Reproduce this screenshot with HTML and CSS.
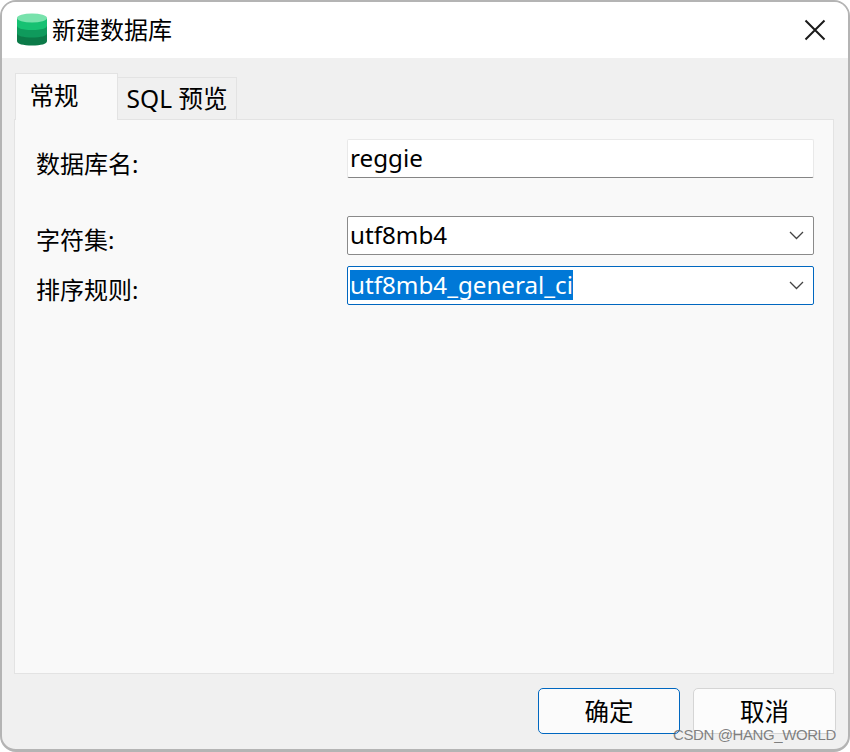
FILE: index.html
```html
<!DOCTYPE html>
<html lang="zh-CN">
<head>
  <meta charset="UTF-8">
  <meta name="viewport" content="width=device-width, initial-scale=1.0">
  <title>新建数据库</title>
  <link rel="stylesheet" href="styles.css">
</head>
<body>
  <div class="window">
    <div class="titlebar">
      <svg class="db-icon" width="30" height="34" viewBox="0 0 30 34">
        <path d="M0 5v23c0 3 6 4.500 15 4.500s15-1.500 15-4.500V5z" fill="#0b7a48"/>
        <path d="M0 5v15c0 3 6 4.500 15 4.500S30 23 30 20V5z" fill="#0f9a5c"/>
        <path d="M0 5v7.500c0 3 6 4.500 15 4.500s15-1.500 15-4.500V5z" fill="#16c172"/>
        <ellipse cx="15" cy="5" rx="15" ry="4.500" fill="#78e2ac"/>
      </svg>
      <span class="title">新建数据库</span>
      <svg class="close" width="22" height="22" viewBox="0 0 22 22">
        <path d="M1.500 1.500l19 19M20.500 1.500l-19 19" stroke="#1a1a1a" stroke-width="2" fill="none"/>
      </svg>
    </div>

    <div class="content">
      <div class="tabs">
        <div class="tab active">常规</div>
        <div class="tab">SQL 预览</div>
      </div>

      <div class="panel">
        <div class="row row-name">
          <label>数据库名:</label>
          <div class="field field-text">reggie</div>
        </div>
        <div class="row row-charset">
          <label>字符集:</label>
          <div class="field">
            utf8mb4
            <svg class="chev" width="15" height="9" viewBox="0 0 15 9"><path d="M1 1l6.500 6.500L14 1" stroke="#444" stroke-width="1.300" fill="none"/></svg>
          </div>
        </div>
        <div class="row row-collation">
          <label>排序规则:</label>
          <div class="field focused">
            <span class="selected">utf8mb4_general_ci</span>
            <svg class="chev" width="15" height="9" viewBox="0 0 15 9"><path d="M1 1l6.500 6.500L14 1" stroke="#444" stroke-width="1.300" fill="none"/></svg>
          </div>
        </div>
      </div>

      <div class="footer">
        <button class="btn primary">确定</button>
        <button class="btn btn-cancel">取消</button>
      </div>
    </div>

    <div class="watermark">CSDN @HANG_WORLD</div>
  </div>
</body>
</html>
```

FILE: styles.css
```css
* {
  box-sizing: border-box;
}
body {
  margin: 0;
  background: #fff;
  font-family: "Noto Sans", "Noto Sans CJK SC", sans-serif;
  font-size: 24px;
  color: #000;
}
.window {
  position: relative;
  width: 850px;
  height: 752px;
  display: flex;
  flex-direction: column;
  border: 2px solid #b4b4b4;
  border-bottom-width: 3px;
  border-radius: 16px;
  overflow: hidden;
  background: #f0f0f0;
}
.titlebar {
  height: 56px;
  flex: none;
  display: flex;
  align-items: center;
  padding: 0 22px 0 15px;
  background: #fff;
}
.db-icon {
  margin-right: 5px;
}
.title {
  flex: 1;
  font-size: 24px;
  line-height: 56px;
}
.content {
  flex: 1;
  display: flex;
  flex-direction: column;
  padding: 15px 14px 0 12px;
}
.tabs {
  display: flex;
  align-items: flex-end;
  height: 46px;
  padding-left: 1px;
  font-size: 24.5px;
}
.tab {
  width: 119px;
  height: 42px;
  border: 1px solid #e3e3e3;
  border-left: 0;
  border-bottom: 0;
  background: #f0f0f0;
  line-height: 42px;
  text-align: center;
}
.tab.active {
  width: 103px;
  height: 47px;
  margin-bottom: -1px;
  line-height: 43px;
  border-left: 1px solid #e3e3e3;
  background: #f9f9f9;
  padding-right: 25px;
  position: relative;
  z-index: 1;
}
.panel {
  height: 555px;
  padding: 19px 19px 0 21px;
  border: 1px solid #e3e3e3;
  background: #f9f9f9;
}
.row {
  display: flex;
  align-items: center;
  height: 39px;
}
.row label {
  width: 311px;
  flex: none;
  margin-top: 5px;
}
.row-name label {
  margin-top: 8px;
}
.row-charset {
  margin-top: 38px;
}
.row-collation {
  margin-top: 11px;
}
.field {
  flex: 1;
  height: 39px;
  display: flex;
  align-items: center;
  justify-content: space-between;
  padding: 0 9px 2px 2px;
  border: 1px solid #8a8a8a;
  border-radius: 2px;
  background: #fff;
  font-size: 24.2px;
}
.field-text {
  border-color: #e9e9e9;
  border-bottom: 1.500px solid #858585;
}
.field.focused {
  border-color: #0067c0;
}
.selected {
  background: #0078d7;
  color: #fff;
  line-height: 30px;
}
.chev {
  margin-top: 2px;
}
.footer {
  display: flex;
  justify-content: flex-end;
  gap: 13px;
  padding-top: 14px;
  margin-right: -2px;
}
.btn {
  width: 142px;
  height: 46px;
  padding: 0 0 2px;
  border: 1px solid #d5d5d5;
  border-radius: 5px;
  background: #fcfcfc;
  font: inherit;
  font-size: 24.5px;
  color: #000;
}
.btn-cancel {
  width: 143px;
}
.btn.primary {
  border-color: #0067c0;
  background: #fbfbfb;
}
.watermark {
  position: absolute;
  right: 12px;
  bottom: 6px;
  font-family: "Liberation Sans", sans-serif;
  font-size: 15px;
  letter-spacing: -0.4px;
  color: rgba(90, 90, 90, 0.75);
}
```
